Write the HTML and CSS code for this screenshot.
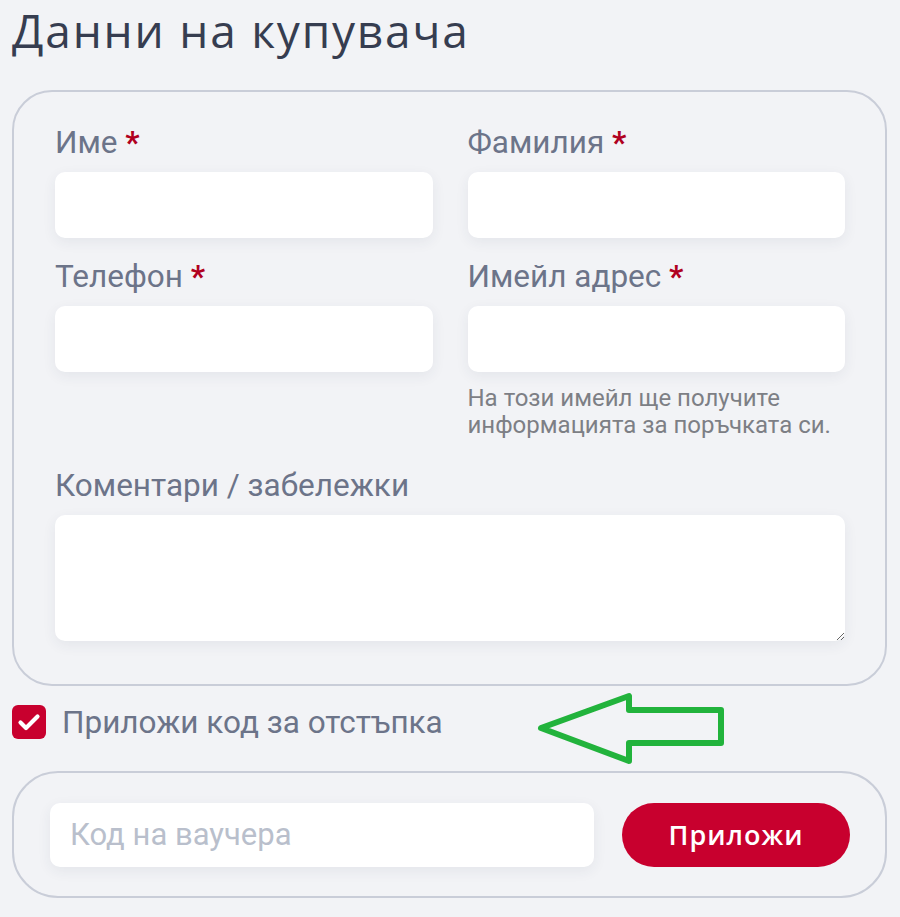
FILE: index.html
```html
<!DOCTYPE html>
<html lang="bg">
<head>
    <meta charset="UTF-8">
    <meta name="viewport" content="width=device-width, initial-scale=1.0">
    <title>Данни на купувача</title>
    <link rel="stylesheet" href="styles.css">
</head>
<body>
    <div class="checkout">
        <h1 class="title">Данни на купувача</h1>

        <form class="card buyer-card">
            <div class="grid">
                <div class="field">
                    <label for="fname">Име <span class="req">*</span></label>
                    <input type="text" id="fname" name="fname">
                </div>
                <div class="field">
                    <label for="lname">Фамилия <span class="req">*</span></label>
                    <input type="text" id="lname" name="lname">
                </div>
                <div class="field">
                    <label for="phone">Телефон <span class="req">*</span></label>
                    <input type="text" id="phone" name="phone">
                </div>
                <div class="field">
                    <label for="email">Имейл адрес <span class="req">*</span></label>
                    <input type="text" id="email" name="email">
                    <p class="hint">На този имейл ще получите информацията за поръчката си.</p>
                </div>
                <div class="field wide">
                    <label for="notes">Коментари / забележки</label>
                    <textarea id="notes" name="notes"></textarea>
                </div>
            </div>
        </form>

        <div class="voucher-toggle">
            <span class="box">
                <svg width="24" height="20" viewBox="0 0 24 20"><path d="M3.5 10.5l5.5 5.5L20.5 4.5" fill="none" stroke="#fff" stroke-width="4.2" stroke-linecap="round" stroke-linejoin="round"/></svg>
            </span>
            <span class="toggle-text">Приложи код за отстъпка</span>
            <svg class="arrow" width="192" height="76" viewBox="0 0 192 76">
                <polygon points="6,39 94,7 94,21 186,21 186,54 94,54 94,72" fill="none" stroke="#22b33c" stroke-width="6" stroke-linejoin="round"/>
            </svg>
        </div>

        <div class="card voucher-card">
            <input type="text" class="voucher-input" placeholder="Код на ваучера">
            <button type="button" class="apply-btn">Приложи</button>
        </div>
    </div>
</body>
</html>
```

FILE: styles.css
```css
body {
    margin: 0;
    background-color: #f2f3f6;
    font-family: Roboto, "Noto Sans", sans-serif;
}
.checkout {
    width: 875px;
    padding: 3px 0 0 12px;
}
.title {
    font-family: "Open Sans", "Noto Sans", sans-serif;
    font-weight: 500;
    font-size: 46px;
    letter-spacing: 1.8px;
    line-height: 54px;
    color: #363d50;
    margin: 0 0 33px 0;
}
.card {
    border: 2px solid #c9cdd8;
    border-radius: 40px;
    box-sizing: border-box;
}
.buyer-card {
    padding: 33px 40px 43px 41px;
}
.grid {
    display: grid;
    grid-template-columns: 1fr 1fr;
    column-gap: 35px;
    row-gap: 21px;
}
.field.wide {
    grid-column: 1 / 3;
}
label {
    display: block;
    font-size: 31.5px;
    line-height: 36px;
    color: #6c7489;
    margin-bottom: 11px;
}
.req {
    color: #b00020;
    font-weight: bold;
}
input[type="text"],
textarea {
    display: block;
    width: 100%;
    height: 66px;
    border: none;
    border-radius: 10px;
    background: #fff;
    box-shadow: 0 4px 14px rgba(40, 50, 80, 0.07);
    box-sizing: border-box;
    padding: 0 20px;
    font-family: Roboto, sans-serif;
    font-size: 31px;
    color: #363d50;
    outline: none;
}
textarea {
    height: 126px;
    padding: 12px 20px;
    resize: vertical;
}
.hint {
    margin: 13px 0 8px 0;
    font-size: 24px;
    line-height: 27px;
    color: #7d7f85;
}
.voucher-toggle {
    position: relative;
    display: flex;
    align-items: center;
    gap: 16px;
    margin-top: 19px;
    height: 34px;
}
.box {
    width: 34px;
    height: 34px;
    border-radius: 6px;
    background: #c8002e;
    display: flex;
    align-items: center;
    justify-content: center;
}
.toggle-text {
    font-size: 31.5px;
    color: #6c7489;
}
.arrow {
    position: absolute;
    left: 523px;
    top: -16px;
}
.voucher-card {
    margin-top: 32px;
    height: 127px;
    border-radius: 46px;
    display: flex;
    align-items: center;
    gap: 28px;
    padding: 0 35px 0 36px;
}
.voucher-input {
    flex: 1;
    height: 64px !important;
}
.voucher-input::placeholder {
    color: #b9bfcc;
}
.apply-btn {
    width: 228px;
    height: 64px;
    border: none;
    border-radius: 32px;
    background: #c8002e;
    color: #fff;
    font-family: "Open Sans", "Noto Sans", sans-serif;
    font-weight: 600;
    font-size: 27px;
    letter-spacing: 1px;
    cursor: pointer;
}
```
